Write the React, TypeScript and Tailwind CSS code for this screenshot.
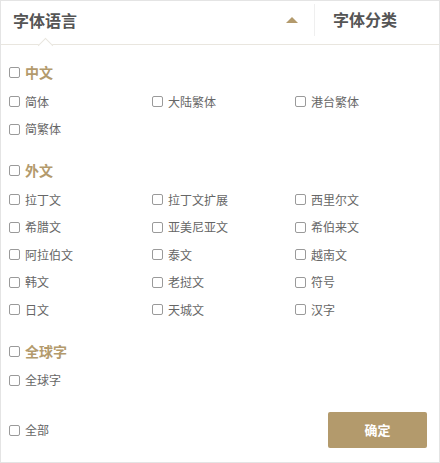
const groups = [
  { title: "中文", items: ["简体", "大陆繁体", "港台繁体", "简繁体"] },
  {
    title: "外文",
    items: [
      "拉丁文",
      "拉丁文扩展",
      "西里尔文",
      "希腊文",
      "亚美尼亚文",
      "希伯来文",
      "阿拉伯文",
      "泰文",
      "越南文",
      "韩文",
      "老挝文",
      "符号",
      "日文",
      "天城文",
      "汉字",
    ],
  },
  { title: "全球字", items: ["全球字"] },
];

const Box = () => (
  <span className="w-[11px] h-[11px] shrink-0 rounded-[2px] border border-[#9a9a9a] bg-white" />
);

const App = () => {
  return (
    <div
      className="w-[440px] h-[463px] bg-white border border-[#e4e4e4] flex flex-col"
      style={{ fontFamily: '"Microsoft YaHei", "Noto Sans CJK SC", sans-serif' }}
    >
      {/* 头部 */}
      <div className="relative h-[44px] flex border-b border-[#e9e6df] shrink-0">
        <div className="flex-1 flex items-center justify-between pl-[12px] pr-[16px]">
          <span className="text-[16px] font-bold text-[#555] leading-none -mt-[6px]">字体语言</span>
          <span className="w-0 h-0 border-l-[6px] border-r-[6px] border-b-[6px] border-l-transparent border-r-transparent border-b-[#b39a6c] -mt-[6px]" />
        </div>
        <div className="w-[125px] flex items-center pl-[18px] border-l border-[#efefef] my-[3px] mb-[8px]">
          <span className="text-[16px] font-bold text-[#555] leading-none -mt-[2px]">字体分类</span>
        </div>
        {/* 小三角 */}
        <span className="absolute left-[39px] top-[39px] w-[11px] h-[11px] rotate-45 bg-white border-t border-l border-[#e9e6df]" />
      </div>

      {/* 内容 */}
      <div className="flex-1 flex flex-col pl-[8px] pr-[12px] pt-[12px]">
        {groups.map((g, i) => (
          <div key={g.title} className={i > 0 ? "mt-[12px]" : ""}>
            <label className="h-[31px] flex items-center gap-[5px]">
              <Box />
              <span className="text-[14px] font-bold text-[#b39a6c]">{g.title}</span>
            </label>
            <div className="grid grid-cols-[143px_143px_143px]">
              {g.items.map((it) => (
                <label key={it} className="h-[27.5px] flex items-center gap-[5px]">
                  <Box />
                  <span className="text-[12px] text-[#666]">{it}</span>
                </label>
              ))}
            </div>
          </div>
        ))}

        {/* 底部 */}
        <div className="mt-[18px] flex items-center justify-between">
          <label className="flex items-center gap-[5px]">
            <Box />
            <span className="text-[12px] text-[#666]">全部</span>
          </label>
          <button className="w-[99px] h-[36px] rounded-[2px] bg-[#b39a6c] text-white text-[13px] font-bold">
            确定
          </button>
        </div>
      </div>
    </div>
  );
};

export default App;
